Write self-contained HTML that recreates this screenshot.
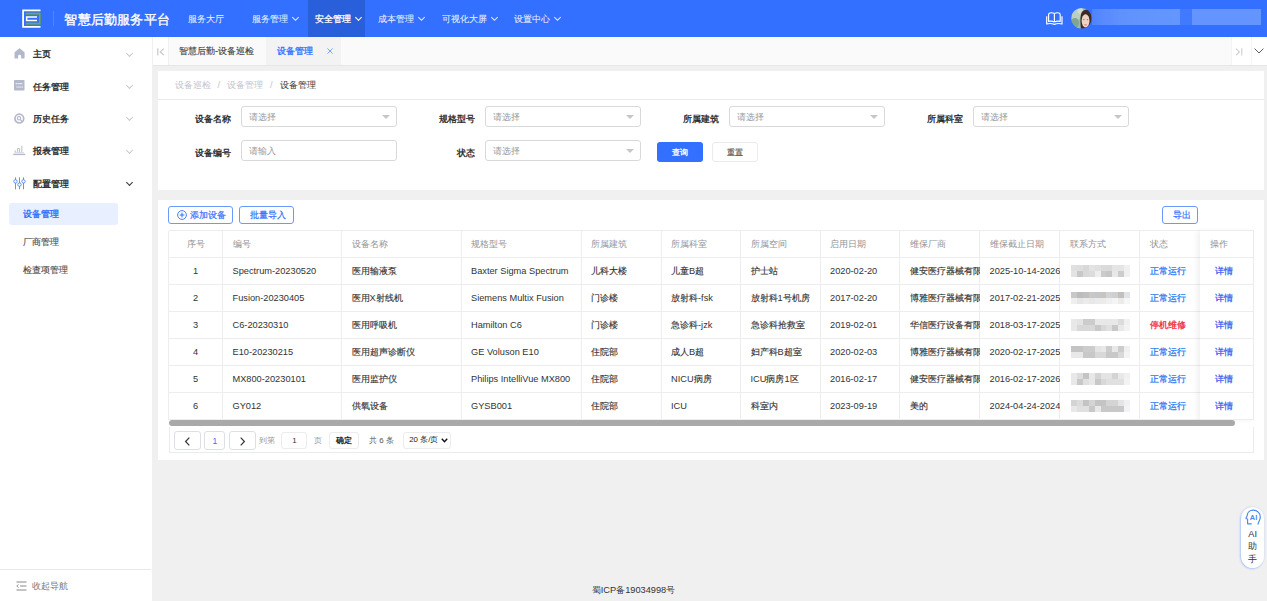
<!DOCTYPE html>
<html><head><meta charset="utf-8">
<style>
*{box-sizing:border-box;margin:0;padding:0}
html,body{width:1267px;height:601px;overflow:hidden;background:#f0f0f0;font-family:"Liberation Sans",sans-serif;font-size:9.24px;color:#333}
.abs{position:absolute}
#hdr{position:absolute;left:0;top:0;width:1267px;height:37px;background:#3370ff}
.hm{position:absolute;top:0.6px;height:37px;line-height:37px;color:rgba(255,255,255,.85);font-size:9.24px;white-space:nowrap;-webkit-text-stroke:0.15px rgba(255,255,255,.6)}
.chev{display:inline-block;width:5px;height:5px;border-right:0.9px solid currentColor;border-bottom:0.9px solid currentColor;transform:rotate(45deg);margin-left:5px;position:relative;top:-1.8px}
#side{position:absolute;left:0;top:37px;width:152.5px;height:564px;background:#fff;border-right:1px solid #f0f0f0}
.si{position:absolute;left:0;width:151px;height:20px;line-height:20px;font-size:9.24px;color:#262626;font-weight:400;-webkit-text-stroke:0.32px #262626}
.si .t{position:absolute;left:33px;top:0}
.si .c{position:absolute;left:127px;top:6.3px;width:5px;height:5px;border-right:1px solid #c8c8c8;border-bottom:1px solid #c8c8c8;transform:rotate(45deg)}
.sub{position:absolute;left:22.6px;font-size:9.24px;color:#4a4a4a;line-height:20px;height:20px;-webkit-text-stroke:0.12px #4a4a4a}
#tabs{position:absolute;left:152.5px;top:37px;width:1114.5px;height:28.5px;background:#fafafa;border-bottom:1px solid #e6e6e6}
.card{position:absolute;background:#fff}
.lbl{position:absolute;font-size:9.24px;color:#222;font-weight:400;-webkit-text-stroke:0.3px #222;line-height:26px;height:21px;text-align:right;white-space:nowrap}
.inp{position:absolute;width:156px;height:21.4px;border:1px solid #d9d9d9;border-radius:3px;background:#fff}
.inp .ph{position:absolute;left:7px;top:1.3px;line-height:19px;color:#9a9a9a;font-size:9.24px}
.inp .tri{position:absolute;right:6px;top:8.3px;width:0;height:0;border-left:4px solid transparent;border-right:4px solid transparent;border-top:4.5px solid #c4c7cd}
.btnp{position:absolute;border:1px solid #6b99ff;border-radius:3px;color:#3370ff;font-size:9.24px;text-align:center;line-height:16.2px;height:18px;-webkit-text-stroke:0.2px #3370ff}
table.tb{position:absolute;border-collapse:collapse;table-layout:fixed}
.tb td{border:1px solid #ebebeb;height:27px;padding:0 0 0 10px;font-size:9.24px;color:#333;white-space:nowrap;overflow:hidden}
.tb tr.h td{color:#909399;height:27px}
.tb td.cen{text-align:center;padding:0}
.blue{color:#2d7cf2 !important}
.red{color:#f0273a !important}
.lnk{color:#3f62f0 !important}
.blur{display:inline-block;width:60px;height:12px;border-radius:3px;background:linear-gradient(90deg,#e6e6e6 0,#d9d9d9 20%,#e3e3e3 35%,#d0d0d0 55%,#e0e0e0 70%,#d5d5d5 85%,#ececec 100%);filter:blur(1px);vertical-align:middle}
.pbtn{position:absolute;height:18.5px;border:1px solid #dcdfe6;border-radius:3px;background:#fff;font-size:9.24px;text-align:center;line-height:16.5px}
.ptxt{position:absolute;font-size:7.92px;color:#999;line-height:18px}

.hl{position:absolute;left:168.5px;width:1085px;height:1px;background:#ededed}
.vl{position:absolute;width:1px;background:#ededed}
.cell{position:absolute;height:27px;line-height:27px;padding-left:10px;white-space:nowrap;overflow:hidden;font-size:9.24px}
.cell.h{color:#909399;line-height:26px}
.cell.d{color:#333;padding-top:0.6px}
.cell .zh{-webkit-text-stroke:0.14px currentColor}
.cell.blue .zh,.cell.red .zh,.cell.lnk .zh{-webkit-text-stroke:0.28px currentColor}
.fixc{position:absolute;background:#fff;box-shadow:-3px 0 5px rgba(0,0,0,.06);border-right:1px solid #ebebeb}
.hl2{position:absolute;left:0;width:100%;height:1px;background:#ededed}
.blur{position:absolute;width:60px;height:12px;border-radius:4px;background:linear-gradient(90deg,#e8e8e8 0,#dadada 20%,#e2e2e2 35%,#d2d2d2 55%,#e0e0e0 70%,#d6d6d6 85%,#eeeeee 100%);filter:blur(0.8px)}
.mos{position:absolute;width:59px;height:11.8px;display:grid;grid-template-columns:repeat(10,5.9px);grid-template-rows:5.9px 5.9px;filter:blur(0.4px)}
.mos i{display:block}
</style></head>
<body>
<!-- HEADER -->
<div id="hdr">
  <svg class="abs" style="left:18px;top:6px" width="28" height="26" viewBox="0 0 28 26">
    <path d="M22.5 4.45H5.1V20.95H22.5" fill="none" stroke="#fff" stroke-width="1.8"/>
    <path d="M7.8 7.65H21.75V17.65H7.8" fill="none" stroke="#73b21a" stroke-width="1.6"/>
    <path d="M19 10.95H8.65V14.4H19" fill="none" stroke="#fff" stroke-width="1.5"/>
  </svg>
  <div class="abs" style="left:53px;top:11px;width:1px;height:15px;background:rgba(255,255,255,.15)"></div>
  <div class="hm" style="left:64.4px;font-size:13.2px;color:#fff;-webkit-text-stroke:0.35px #fff;letter-spacing:0.2px">智慧后勤服务平台</div>
  <div class="hm" style="left:188.4px">服务大厅</div>
  <div class="hm" style="left:252px">服务管理<span class="chev"></span></div>
  <div class="abs" style="left:308px;top:0;width:57px;height:37px;background:#2a5fdc"></div>
  <div class="hm" style="left:315.2px;color:#fff;-webkit-text-stroke:0.3px #fff">安全管理<span class="chev"></span></div>
  <div class="hm" style="left:378px">成本管理<span class="chev"></span></div>
  <div class="hm" style="left:442.4px">可视化大屏<span class="chev"></span></div>
  <div class="hm" style="left:514.4px">设置中心<span class="chev"></span></div>
  <!-- book icon -->
  <svg class="abs" style="left:1042px;top:8px" width="24" height="22" viewBox="0 0 24 22">
    <g fill="none" stroke="#fff" stroke-width="1.15" stroke-linejoin="round">
    <path d="M12.4 5.6C11 4.7 9 4.6 7.8 5Q6.6 5.4 6.6 6.6V13.4Q9.6 12.6 12.4 13.9"/>
    <path d="M12.4 5.6C13.8 4.7 15.8 4.6 17 5Q18.2 5.4 18.2 6.6V13.4Q15.2 12.6 12.4 13.9"/>
    <path d="M12.4 5.6V13.9"/>
    <path d="M4.7 8.3V16Q8.6 14.8 12.4 16.4Q16.2 14.8 20 16V8.3"/>
    </g>
  </svg>
  <!-- avatar -->
  <svg class="abs" style="left:1070.8px;top:7.9px" width="20.8" height="20.8" viewBox="0 0 21 21">
    <defs><clipPath id="cc"><circle cx="10.5" cy="10.5" r="10.4"/></clipPath><filter id="bl"><feGaussianBlur stdDeviation="0.5"/></filter></defs>
    <g clip-path="url(#cc)" filter="url(#bl)">
      <rect width="21" height="21" fill="#98b8aa"/>
      <ellipse cx="5" cy="7" rx="5" ry="6" fill="#b9cfc3"/>
      <ellipse cx="4" cy="15" rx="4" ry="5" fill="#7fa593"/>
      <ellipse cx="9.5" cy="3" rx="3" ry="3" fill="#d0ddd5"/>
      <path d="M10 21C9.5 14 9 8 11 4C13 1 18 0.5 21 3V21Z" fill="#3d2b22"/>
      <ellipse cx="14.7" cy="13" rx="4" ry="6.6" fill="#eed4c4"/>
      <ellipse cx="14.7" cy="17" rx="1.6" ry="0.8" fill="#d89890"/>
      <ellipse cx="13" cy="11.8" rx="0.9" ry="0.5" fill="#6b5550"/>
      <ellipse cx="16.6" cy="11.8" rx="0.9" ry="0.5" fill="#6b5550"/>
    </g>
  </svg>
  <div class="abs" style="left:1180px;top:9px;width:12px;height:16px;background:rgba(255,255,255,.07)"></div>
  <div class="abs" style="left:1092px;top:9px;width:88px;height:16px;background:linear-gradient(90deg,#4f82ff 0,#5a8bff 15%,#6193ff 40%,#6496ff 100%)"></div>
  <div class="abs" style="left:1192px;top:9px;width:69px;height:16px;background:#6394ff"></div>
</div>

<!-- SIDEBAR -->
<div id="side">
  <div class="si" style="top:7.3px">
    <svg class="abs" style="left:13.8px;top:3.9px" width="11" height="11" viewBox="0 0 11 11"><path d="M5.3 0.3Q5.6 0.2 5.9 0.5L10.2 4.1Q10.6 4.5 10.6 5V9.8Q10.6 10.5 9.9 10.5H7.1V8Q7.1 6.7 5.6 6.7Q4.1 6.7 4.1 8V10.5H1.2Q0.5 10.5 0.5 9.8V5Q0.5 4.5 0.9 4.1Z" fill="#b4b8cb"/></svg>
    <span class="t">主页</span><span class="c"></span></div>
  <div class="si" style="top:39.7px">
    <svg class="abs" style="left:13.6px;top:3.6px" width="11" height="11" viewBox="0 0 11 11"><rect x="0" y="0" width="10.5" height="10.5" rx="0.8" fill="#b4b8cb"/><path d="M3.3 3.6H8.4M2.2 7H7.3" stroke="#e6e8ef" stroke-width="1.1"/><circle cx="2.3" cy="3.6" r="0.8" fill="#e6e8ef"/><circle cx="8.3" cy="7" r="0.8" fill="#e6e8ef"/></svg>
    <span class="t">任务管理</span><span class="c"></span></div>
  <div class="si" style="top:72px">
    <svg class="abs" style="left:13.7px;top:4.4px" width="11" height="12" viewBox="0 0 11 12"><circle cx="5.3" cy="5.6" r="4.4" fill="none" stroke="#b4b8cb" stroke-width="1.7"/><circle cx="5" cy="5.3" r="1.7" fill="none" stroke="#b4b8cb" stroke-width="1.1"/><path d="M6.3 6.6L8.3 8.8" stroke="#b4b8cb" stroke-width="1.2"/></svg>
    <span class="t">历史任务</span><span class="c"></span></div>
  <div class="si" style="top:104.3px">
    <svg class="abs" style="left:13px;top:4.2px" width="13" height="11" viewBox="0 0 13 11"><path d="M0.2 9.4H12.2" stroke="#b4b8cb" stroke-width="1.4"/><path d="M1.5 7.6H11" stroke="#c8cbd8" stroke-width="0.7"/><path d="M2.2 7.2V5.3M4.6 7.2V3.6H6.6V7.2M8.8 7.2V0.8" fill="none" stroke="#b4b8cb" stroke-width="0.9"/></svg>
    <span class="t">报表管理</span><span class="c"></span></div>
  <div class="si" style="top:136.6px">
    <svg class="abs" style="left:12.5px;top:3.3px" width="13" height="13" viewBox="0 0 13 13"><g fill="none" stroke="#4b8bf8" stroke-width="0.9"><path d="M2.5 0.3V12.3M6.5 0.3V12.3M10.5 0.3V12.3"/><circle cx="2.5" cy="4.4" r="1.7" fill="#fff"/><circle cx="6.5" cy="7.6" r="1.7" fill="#fff"/><circle cx="10.5" cy="4.4" r="1.7" fill="#fff"/></g></svg>
    <span class="t">配置管理</span><span class="c" style="border-color:#333"></span></div>
  <div class="abs" style="left:9.3px;top:166px;width:109px;height:21.5px;background:#e8effe;border-radius:3px"></div>
  <div class="sub" style="top:166.8px;color:#3370ff;-webkit-text-stroke:0.35px #3370ff">设备管理</div>
  <div class="sub" style="top:194.8px">厂商管理</div>
  <div class="sub" style="top:223.3px">检查项管理</div>
  <div class="abs" style="left:0;top:531.5px;width:151px;height:1px;background:#e8e8e8"></div>
  <svg class="abs" style="left:15.5px;top:543.5px" width="11" height="10" viewBox="0 0 11 10"><path d="M0.5 1H10.5M4 5H10.5M0.5 9H10.5" stroke="#888" stroke-width="1"/><path d="M2.5 3.5L0.8 5L2.5 6.5" fill="none" stroke="#888" stroke-width="0.9"/></svg>
  <div class="abs" style="left:32px;top:538.5px;line-height:20px;font-size:9.24px;color:#777">收起导航</div>
</div>

<!-- TABS -->
<div id="tabs">
  <div class="abs" style="left:0;top:0;width:15.5px;height:27.5px;background:#fff"></div>
  <svg class="abs" style="left:4.5px;top:10.8px" width="8" height="8" viewBox="0 0 8 8"><path d="M0.8 0.2V7.6M6.8 0.6L3.2 3.9L6.8 7.2" fill="none" stroke="#c4c4c4" stroke-width="1.1"/></svg>
  <div class="abs" style="left:15.5px;top:0;width:1px;height:27.5px;background:#f0f0f0"></div>
  <div class="abs" style="left:26.5px;top:1.3px;line-height:27px;color:#444;-webkit-text-stroke:0.15px #444">智慧后勤-设备巡检</div>
  <div class="abs" style="left:113.5px;top:0;width:74.7px;height:27.5px;background:#f3f3f3"></div>
  <div class="abs" style="left:124.3px;top:1.3px;line-height:27px;color:#3370ff;-webkit-text-stroke:0.3px #3370ff">设备管理</div>
  <svg class="abs" style="left:174.2px;top:11.2px" width="6" height="6" viewBox="0 0 6 6"><path d="M0.4 0.4L5.6 5.6M5.6 0.4L0.4 5.6" stroke="#6b9bff" stroke-width="0.9"/></svg>
  <div class="abs" style="left:1078px;top:0;width:20px;height:27.5px;background:#fff;border-left:1px solid #f4f4f4"></div>
  <svg class="abs" style="left:1082.8px;top:10.7px" width="8" height="8" viewBox="0 0 8 8"><path d="M6.8 0.2V7.6M1 0.6L4.4 3.9L1 7.2" fill="none" stroke="#cdcdcd" stroke-width="1.1"/></svg>
  <div class="abs" style="left:1098px;top:0;width:16.5px;height:27.5px;background:#fff;border-left:1px solid #f4f4f4"></div>
  <svg class="abs" style="left:1101.5px;top:11.2px" width="10" height="6" viewBox="0 0 10 6"><path d="M0.6 0.6L5 5L9.4 0.6" fill="none" stroke="#555" stroke-width="0.95"/></svg>
</div>

<!-- CARD 1: breadcrumb + form -->
<div class="card" style="left:158px;top:71px;width:1106px;height:119px">
  <div class="abs" style="left:16.5px;top:7px;line-height:14px;font-size:9.24px;color:#c0c4cc;white-space:nowrap">设备巡检 <span style="margin:0 4.4px">/</span> 设备管理 <span style="margin:0 4.4px">/</span> <span style="color:#333;font-weight:500">设备管理</span></div>
  <div class="abs" style="left:0;top:28px;width:1106px;height:1px;background:#ebebeb"></div>
  <div class="lbl" style="left:0;width:73px;top:35px">设备名称</div>
  <div class="inp" style="left:83px;top:35px"><span class="ph">请选择</span><i class="tri"></i></div>
  <div class="lbl" style="left:244px;width:73px;top:35px">规格型号</div>
  <div class="inp" style="left:327px;top:35px"><span class="ph">请选择</span><i class="tri"></i></div>
  <div class="lbl" style="left:488px;width:73px;top:35px">所属建筑</div>
  <div class="inp" style="left:571px;top:35px"><span class="ph">请选择</span><i class="tri"></i></div>
  <div class="lbl" style="left:732px;width:73px;top:35px">所属科室</div>
  <div class="inp" style="left:815px;top:35px"><span class="ph">请选择</span><i class="tri"></i></div>
  <div class="lbl" style="left:0;width:73px;top:69px">设备编号</div>
  <div class="inp" style="left:83px;top:69px"><span class="ph">请输入</span></div>
  <div class="lbl" style="left:244px;width:73px;top:69px">状态</div>
  <div class="inp" style="left:327px;top:69px"><span class="ph">请选择</span><i class="tri"></i></div>
  <div class="abs" style="left:498.6px;top:71.2px;width:46.2px;height:19.4px;background:#3370ff;border-radius:3px;color:#fff;font-size:7.92px;text-align:center;line-height:19.4px;padding-top:1px;-webkit-text-stroke:0.3px #fff">查询</div>
  <div class="abs" style="left:554px;top:71.2px;width:46px;height:19.4px;border:1px solid #ebebeb;border-radius:3px;color:#444;font-size:7.92px;text-align:center;line-height:17.4px;padding-top:1px;-webkit-text-stroke:0.12px #444">重置</div>
</div>

<!-- CARD 2: table -->
<div class="card" style="left:158px;top:200px;width:1106px;height:260px">
  <div class="btnp" style="left:10px;top:6px;width:65px"><svg style="position:relative;top:1.8px;margin-right:2.5px;margin-left:1.5px" width="10" height="10" viewBox="0 0 10 10"><circle cx="5" cy="5" r="4.4" fill="none" stroke="#3370ff" stroke-width="0.9"/><path d="M5 2.6V7.4M2.6 5H7.4" stroke="#3370ff" stroke-width="1"/></svg>添加设备</div>
  <div class="btnp" style="left:81px;top:6px;width:55px;padding-left:2px">批量导入</div>
  <div class="btnp" style="left:1004px;top:6px;width:36px;padding-left:3px">导出</div>
</div>
<div id="tbl" class="abs" style="left:0;top:0;width:1267px;height:601px">
<div class="hl" style="top:230.0px"></div>
<div class="hl" style="top:257.0px"></div>
<div class="hl" style="top:284.0px"></div>
<div class="hl" style="top:311.0px"></div>
<div class="hl" style="top:338.0px"></div>
<div class="hl" style="top:365.0px"></div>
<div class="hl" style="top:392.0px"></div>
<div class="hl" style="top:419.0px"></div>
<div class="vl" style="left:168.0px;top:230.5px;height:189.0px"></div>
<div class="vl" style="left:222.0px;top:230.5px;height:189.0px"></div>
<div class="vl" style="left:341.0px;top:230.5px;height:189.0px"></div>
<div class="vl" style="left:460.5px;top:230.5px;height:189.0px"></div>
<div class="vl" style="left:580.5px;top:230.5px;height:189.0px"></div>
<div class="vl" style="left:660.5px;top:230.5px;height:189.0px"></div>
<div class="vl" style="left:740.0px;top:230.5px;height:189.0px"></div>
<div class="vl" style="left:819.5px;top:230.5px;height:189.0px"></div>
<div class="vl" style="left:899.0px;top:230.5px;height:189.0px"></div>
<div class="vl" style="left:979.0px;top:230.5px;height:189.0px"></div>
<div class="vl" style="left:1059.0px;top:230.5px;height:189.0px"></div>
<div class="vl" style="left:1139.0px;top:230.5px;height:189.0px"></div>
<div class="cell h" style="left:168.5px;top:230.5px;width:54.0px;text-align:center;padding:0">序号</div>
<div class="cell h" style="left:222.5px;top:230.5px;width:119.0px">编号</div>
<div class="cell h" style="left:341.5px;top:230.5px;width:119.5px">设备名称</div>
<div class="cell h" style="left:461px;top:230.5px;width:120px">规格型号</div>
<div class="cell h" style="left:581px;top:230.5px;width:80px">所属建筑</div>
<div class="cell h" style="left:661px;top:230.5px;width:79.5px">所属科室</div>
<div class="cell h" style="left:740.5px;top:230.5px;width:79.5px">所属空间</div>
<div class="cell h" style="left:820px;top:230.5px;width:79.5px">启用日期</div>
<div class="cell h" style="left:899.5px;top:230.5px;width:80.0px">维保厂商</div>
<div class="cell h" style="left:979.5px;top:230.5px;width:80.0px">维保截止日期</div>
<div class="cell h" style="left:1059.5px;top:230.5px;width:80.0px">联系方式</div>
<div class="cell h" style="left:1139.5px;top:230.5px;width:60.5px">状态</div>
<div class="cell d" style="left:168.5px;top:257.5px;width:54.0px;text-align:center;padding:0">1</div>
<div class="cell d" style="left:222.5px;top:257.5px;width:119.0px">Spectrum-20230520</div>
<div class="cell d bd" style="left:341.5px;top:257.5px;width:119.5px"><span class="zh">医用输液泵</span></div>
<div class="cell d" style="left:461px;top:257.5px;width:120px">Baxter Sigma Spectrum</div>
<div class="cell d bd" style="left:581px;top:257.5px;width:80px"><span class="zh">儿科大楼</span></div>
<div class="cell d bd" style="left:661px;top:257.5px;width:79.5px"><span class="zh">儿童</span>B<span class="zh">超</span></div>
<div class="cell d bd" style="left:740.5px;top:257.5px;width:79.5px"><span class="zh">护士站</span></div>
<div class="cell d" style="left:820px;top:257.5px;width:79.5px">2020-02-20</div>
<div class="cell d bd" style="left:899.5px;top:257.5px;width:80.0px"><span class="zh">健安医疗器械有限公司</span></div>
<div class="cell d" style="left:979.5px;top:257.5px;width:80.0px">2025-10-14-2026</div>
<div class="mos" style="left:1071.1px;top:264.9px"><i style="background:#e0e0e0"></i><i style="background:#dedede"></i><i style="background:#d8d8d8"></i><i style="background:#e3e3e3"></i><i style="background:#e0e0e0"></i><i style="background:#dbdbdb"></i><i style="background:#dadada"></i><i style="background:#e5e5e5"></i><i style="background:#e5e5e5"></i><i style="background:#f0f0f0"></i><i style="background:#e3e3e3"></i><i style="background:#c8c8c8"></i><i style="background:#d9d9d9"></i><i style="background:#dcdcdc"></i><i style="background:#eeeeee"></i><i style="background:#cbcbcb"></i><i style="background:#c6c6c6"></i><i style="background:#e8e8e8"></i><i style="background:#cccccc"></i><i style="background:#f0f0f0"></i></div>
<div class="cell d blue" style="left:1139.5px;top:257.5px;width:60.5px"><span class="zh">正常运行</span></div>
<div class="cell d" style="left:168.5px;top:284.5px;width:54.0px;text-align:center;padding:0">2</div>
<div class="cell d" style="left:222.5px;top:284.5px;width:119.0px">Fusion-20230405</div>
<div class="cell d bd" style="left:341.5px;top:284.5px;width:119.5px"><span class="zh">医用</span>X<span class="zh">射线机</span></div>
<div class="cell d" style="left:461px;top:284.5px;width:120px">Siemens Multix Fusion</div>
<div class="cell d bd" style="left:581px;top:284.5px;width:80px"><span class="zh">门诊楼</span></div>
<div class="cell d bd" style="left:661px;top:284.5px;width:79.5px"><span class="zh">放射科</span>-fsk</div>
<div class="cell d bd" style="left:740.5px;top:284.5px;width:79.5px"><span class="zh">放射科</span>1<span class="zh">号机房</span></div>
<div class="cell d" style="left:820px;top:284.5px;width:79.5px">2017-02-20</div>
<div class="cell d bd" style="left:899.5px;top:284.5px;width:80.0px"><span class="zh">博雅医疗器械有限公司</span></div>
<div class="cell d" style="left:979.5px;top:284.5px;width:80.0px">2017-02-21-2025</div>
<div class="mos" style="left:1071.1px;top:291.9px"><i style="background:#c8c8c8"></i><i style="background:#bcbcbc"></i><i style="background:#c0c0c0"></i><i style="background:#c8c8c8"></i><i style="background:#c4c6c8"></i><i style="background:#c8c4be"></i><i style="background:#d0d4d8"></i><i style="background:#cfcfcf"></i><i style="background:#c0c0c0"></i><i style="background:#e0e4e8"></i><i style="background:#efefef"></i><i style="background:#e6e6e6"></i><i style="background:#ebebeb"></i><i style="background:#e8e8e8"></i><i style="background:#e9ebed"></i><i style="background:#ebebeb"></i><i style="background:#eff1f1"></i><i style="background:#f4f4f4"></i><i style="background:#eeeae8"></i><i style="background:#f4f6f8"></i></div>
<div class="cell d blue" style="left:1139.5px;top:284.5px;width:60.5px"><span class="zh">正常运行</span></div>
<div class="cell d" style="left:168.5px;top:311.5px;width:54.0px;text-align:center;padding:0">3</div>
<div class="cell d" style="left:222.5px;top:311.5px;width:119.0px">C6-20230310</div>
<div class="cell d bd" style="left:341.5px;top:311.5px;width:119.5px"><span class="zh">医用呼吸机</span></div>
<div class="cell d" style="left:461px;top:311.5px;width:120px">Hamilton C6</div>
<div class="cell d bd" style="left:581px;top:311.5px;width:80px"><span class="zh">门诊楼</span></div>
<div class="cell d bd" style="left:661px;top:311.5px;width:79.5px"><span class="zh">急诊科</span>-jzk</div>
<div class="cell d bd" style="left:740.5px;top:311.5px;width:79.5px"><span class="zh">急诊科抢救室</span></div>
<div class="cell d" style="left:820px;top:311.5px;width:79.5px">2019-02-01</div>
<div class="cell d bd" style="left:899.5px;top:311.5px;width:80.0px"><span class="zh">华信医疗设备有限公司</span></div>
<div class="cell d" style="left:979.5px;top:311.5px;width:80.0px">2018-03-17-2025</div>
<div class="mos" style="left:1071.1px;top:318.9px"><i style="background:#e8e8e8"></i><i style="background:#e4e4e4"></i><i style="background:#cccccc"></i><i style="background:#cccccc"></i><i style="background:#e8e8e8"></i><i style="background:#e8e8e8"></i><i style="background:#e8e8e8"></i><i style="background:#e8e8e8"></i><i style="background:#dcdcdc"></i><i style="background:#eef0f2"></i><i style="background:#e8e8e8"></i><i style="background:#d8d8d8"></i><i style="background:#d8d8d8"></i><i style="background:#d8d8d8"></i><i style="background:#c8c8c8"></i><i style="background:#d8d8d8"></i><i style="background:#e0e0e0"></i><i style="background:#c8c8c8"></i><i style="background:#e8e8e8"></i><i style="background:#f2f3f4"></i></div>
<div class="cell d red" style="left:1139.5px;top:311.5px;width:60.5px"><span class="zh">停机维修</span></div>
<div class="cell d" style="left:168.5px;top:338.5px;width:54.0px;text-align:center;padding:0">4</div>
<div class="cell d" style="left:222.5px;top:338.5px;width:119.0px">E10-20230215</div>
<div class="cell d bd" style="left:341.5px;top:338.5px;width:119.5px"><span class="zh">医用超声诊断仪</span></div>
<div class="cell d" style="left:461px;top:338.5px;width:120px">GE Voluson E10</div>
<div class="cell d bd" style="left:581px;top:338.5px;width:80px"><span class="zh">住院部</span></div>
<div class="cell d bd" style="left:661px;top:338.5px;width:79.5px"><span class="zh">成人</span>B<span class="zh">超</span></div>
<div class="cell d bd" style="left:740.5px;top:338.5px;width:79.5px"><span class="zh">妇产科</span>B<span class="zh">超室</span></div>
<div class="cell d" style="left:820px;top:338.5px;width:79.5px">2020-02-03</div>
<div class="cell d bd" style="left:899.5px;top:338.5px;width:80.0px"><span class="zh">博雅医疗器械有限公司</span></div>
<div class="cell d" style="left:979.5px;top:338.5px;width:80.0px">2020-02-17-2025</div>
<div class="mos" style="left:1071.1px;top:345.9px"><i style="background:#c4c4c4"></i><i style="background:#c4c4c4"></i><i style="background:#cccccc"></i><i style="background:#cccccc"></i><i style="background:#e4e4e4"></i><i style="background:#e8e8e8"></i><i style="background:#cccccc"></i><i style="background:#e8e8e8"></i><i style="background:#cccccc"></i><i style="background:#eef0f2"></i><i style="background:#e8e8e8"></i><i style="background:#e8e8e8"></i><i style="background:#c8c8c8"></i><i style="background:#c8c8c8"></i><i style="background:#d8d8d8"></i><i style="background:#d8d8d8"></i><i style="background:#c8c8c8"></i><i style="background:#c8c8c8"></i><i style="background:#d8d8d8"></i><i style="background:#f2f3f4"></i></div>
<div class="cell d blue" style="left:1139.5px;top:338.5px;width:60.5px"><span class="zh">正常运行</span></div>
<div class="cell d" style="left:168.5px;top:365.5px;width:54.0px;text-align:center;padding:0">5</div>
<div class="cell d" style="left:222.5px;top:365.5px;width:119.0px">MX800-20230101</div>
<div class="cell d bd" style="left:341.5px;top:365.5px;width:119.5px"><span class="zh">医用监护仪</span></div>
<div class="cell d" style="left:461px;top:365.5px;width:120px">Philips IntelliVue MX800</div>
<div class="cell d bd" style="left:581px;top:365.5px;width:80px"><span class="zh">住院部</span></div>
<div class="cell d bd" style="left:661px;top:365.5px;width:79.5px">NICU<span class="zh">病房</span></div>
<div class="cell d bd" style="left:740.5px;top:365.5px;width:79.5px">ICU<span class="zh">病房</span>1<span class="zh">区</span></div>
<div class="cell d" style="left:820px;top:365.5px;width:79.5px">2016-02-17</div>
<div class="cell d bd" style="left:899.5px;top:365.5px;width:80.0px"><span class="zh">健安医疗器械有限公司</span></div>
<div class="cell d" style="left:979.5px;top:365.5px;width:80.0px">2016-02-17-2026</div>
<div class="mos" style="left:1071.1px;top:372.9px"><i style="background:#e8e8e8"></i><i style="background:#dcdcdc"></i><i style="background:#c4c4c4"></i><i style="background:#e8e8e8"></i><i style="background:#d4d4d4"></i><i style="background:#e4e4e4"></i><i style="background:#e4e4e4"></i><i style="background:#d4d4d4"></i><i style="background:#e8e8e8"></i><i style="background:#eef0f2"></i><i style="background:#e8e8e8"></i><i style="background:#c8c8c8"></i><i style="background:#e0e0e0"></i><i style="background:#e8e8e8"></i><i style="background:#c8c8c8"></i><i style="background:#d8d8d8"></i><i style="background:#e0e0e0"></i><i style="background:#e0e0e0"></i><i style="background:#e0e0e0"></i><i style="background:#f2f3f4"></i></div>
<div class="cell d blue" style="left:1139.5px;top:365.5px;width:60.5px"><span class="zh">正常运行</span></div>
<div class="cell d" style="left:168.5px;top:392.5px;width:54.0px;text-align:center;padding:0">6</div>
<div class="cell d" style="left:222.5px;top:392.5px;width:119.0px">GY012</div>
<div class="cell d bd" style="left:341.5px;top:392.5px;width:119.5px"><span class="zh">供氧设备</span></div>
<div class="cell d" style="left:461px;top:392.5px;width:120px">GYSB001</div>
<div class="cell d bd" style="left:581px;top:392.5px;width:80px"><span class="zh">住院部</span></div>
<div class="cell d bd" style="left:661px;top:392.5px;width:79.5px">ICU</div>
<div class="cell d bd" style="left:740.5px;top:392.5px;width:79.5px"><span class="zh">科室内</span></div>
<div class="cell d" style="left:820px;top:392.5px;width:79.5px">2023-09-19</div>
<div class="cell d bd" style="left:899.5px;top:392.5px;width:80.0px"><span class="zh">美的</span></div>
<div class="cell d" style="left:979.5px;top:392.5px;width:80.0px">2024-04-24-2024</div>
<div class="mos" style="left:1071.1px;top:399.9px"><i style="background:#d4d4d4"></i><i style="background:#dcdcdc"></i><i style="background:#c4c4c4"></i><i style="background:#d4d4d4"></i><i style="background:#c4c4c4"></i><i style="background:#c4c4c4"></i><i style="background:#d4d4d4"></i><i style="background:#d4d4d4"></i><i style="background:#e4e4e4"></i><i style="background:#eef0f2"></i><i style="background:#e8e8e8"></i><i style="background:#e0e0e0"></i><i style="background:#e0e0e0"></i><i style="background:#c8c8c8"></i><i style="background:#e8e8e8"></i><i style="background:#c8c8c8"></i><i style="background:#c8c8c8"></i><i style="background:#c8c8c8"></i><i style="background:#c8c8c8"></i><i style="background:#f2f3f4"></i></div>
<div class="cell d blue" style="left:1139.5px;top:392.5px;width:60.5px"><span class="zh">正常运行</span></div>
<div class="fixc" style="left:1200px;top:230.5px;width:53.5px;height:189.0px">
<div class="hl2" style="top:-0.5px"></div>
<div class="hl2" style="top:26.5px"></div>
<div class="hl2" style="top:53.5px"></div>
<div class="hl2" style="top:80.5px"></div>
<div class="hl2" style="top:107.5px"></div>
<div class="hl2" style="top:134.5px"></div>
<div class="hl2" style="top:161.5px"></div>
<div class="hl2" style="top:188.5px"></div>
<div class="cell h" style="left:0;top:0;width:53.5px">操作</div>
<div class="cell d lnk" style="left:0;top:27px;width:53.5px;text-align:center;padding:0 5px 0 0"><span class="zh">详情</span></div>
<div class="cell d lnk" style="left:0;top:54px;width:53.5px;text-align:center;padding:0 5px 0 0"><span class="zh">详情</span></div>
<div class="cell d lnk" style="left:0;top:81px;width:53.5px;text-align:center;padding:0 5px 0 0"><span class="zh">详情</span></div>
<div class="cell d lnk" style="left:0;top:108px;width:53.5px;text-align:center;padding:0 5px 0 0"><span class="zh">详情</span></div>
<div class="cell d lnk" style="left:0;top:135px;width:53.5px;text-align:center;padding:0 5px 0 0"><span class="zh">详情</span></div>
<div class="cell d lnk" style="left:0;top:162px;width:53.5px;text-align:center;padding:0 5px 0 0"><span class="zh">详情</span></div>
</div>
</div>
<!-- scrollbar -->
<div class="abs" style="left:169px;top:420.2px;width:1066px;height:5.5px;border-radius:3px;background:#a9a9a9"></div>
<!-- pagination -->
<div class="abs" style="left:168.5px;top:426.5px;width:1085px;height:26px;border:1px solid #ebebeb;border-top:none"></div>
<div class="pbtn" style="left:173.5px;top:431.3px;width:27px"><svg style="position:relative;top:2.5px" width="7" height="9" viewBox="0 0 7 9"><path d="M5.3 0.7L1.6 4.5L5.3 8.3" fill="none" stroke="#333" stroke-width="1.2"/></svg></div>
<div class="pbtn" style="left:204.3px;top:431.3px;width:21px;color:#3370ff;font-size:8.5px;line-height:18px">1</div>
<div class="pbtn" style="left:228.7px;top:431.3px;width:27px"><svg style="position:relative;top:2.5px" width="7" height="9" viewBox="0 0 7 9"><path d="M1.7 0.7L5.4 4.5L1.7 8.3" fill="none" stroke="#333" stroke-width="1.2"/></svg></div>
<div class="ptxt" style="left:259px;top:431.5px">到第</div>
<div class="pbtn" style="left:281.2px;top:432.4px;width:26.3px;height:16.6px;line-height:15px;border-color:#ececec;font-size:7.92px">1</div>
<div class="ptxt" style="left:314px;top:431.5px">页</div>
<div class="pbtn" style="left:328.6px;top:432.4px;width:30px;height:16.6px;line-height:15px;border-color:#ececec;font-size:7.92px;font-weight:bold;color:#222">确定</div>
<div class="ptxt" style="left:369px;top:431.5px;color:#555">共 6 条</div>
<div class="pbtn" style="left:403.2px;top:432px;width:48px;height:16.5px;line-height:14.5px;border-color:#ececec;font-size:7.92px;text-align:left;padding-left:5px;color:#222">20 条/页<svg style="position:absolute;right:2px;top:4.7px" width="7" height="5" viewBox="0 0 7 5"><path d="M0.8 0.8L3.5 3.8L6.2 0.8" fill="none" stroke="#111" stroke-width="1.4"/></svg></div>

<!-- footer -->
<div class="abs" style="left:0;top:582px;width:1267px;text-align:center;line-height:16px;font-size:9.24px;color:#333;font-weight:500">蜀ICP备19034998号</div>

<!-- AI button -->
<div class="abs" style="left:1241px;top:507px;width:23.4px;height:61px;border-radius:12px;background:#fff;box-shadow:-0.5px 0.5px 2px rgba(51,112,255,.5)">
  <svg class="abs" style="left:4px;top:2px" width="17" height="17" viewBox="0 0 17 17"><path d="M13 15.2C13.3 13 15.3 11.5 15.3 7.8C15.3 4 12.3 1.2 8.3 1.2C4.8 1.2 2.3 3.5 2.2 6.8L0.9 9.3L2.6 10.2V14.8H6.3" fill="none" stroke="#4a86f7" stroke-width="1.15" stroke-linejoin="round" stroke-linecap="round"/><text x="8.5" y="10.9" font-family="Liberation Sans" font-size="7.4" font-weight="bold" fill="#4a86f7" text-anchor="middle">AI</text></svg>
  <div class="abs" style="left:0;top:20.6px;width:23.4px;text-align:center;line-height:12.67px;font-size:9.24px;color:#333">AI<br>助<br>手</div>
</div>
</body></html>
